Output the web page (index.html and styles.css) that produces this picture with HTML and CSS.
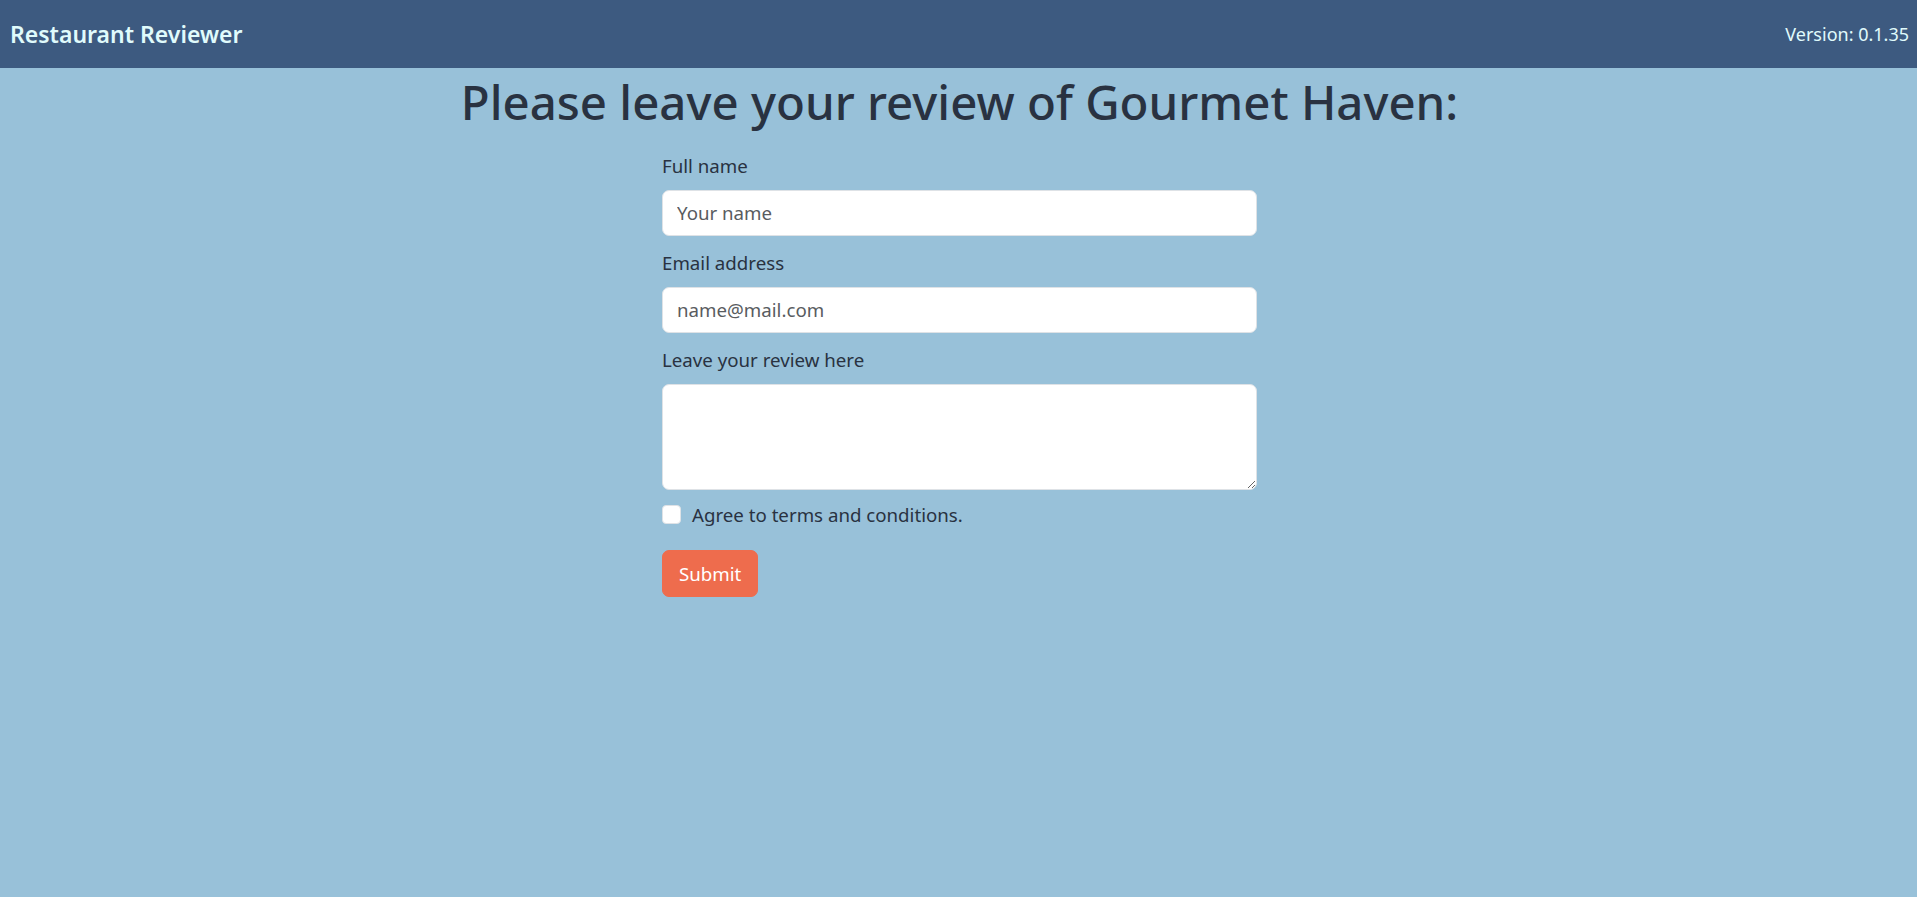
FILE: index.html
```html
<!DOCTYPE html>
<html lang="en">
<head>
<meta charset="utf-8">
<title>Restaurant Reviewer</title>
<link rel="stylesheet" href="styles.css">
</head>
<body>
<header class="topbar">
  <span class="brand">Restaurant Reviewer</span>
  <span class="version">Version: 0.1.35</span>
</header>
<main class="page">
  <h1 class="title">Please leave your review of Gourmet Haven:</h1>
  <form class="review-form">
    <label class="field-label" for="name">Full name</label>
    <input class="field" id="name" type="text" placeholder="Your name">
    <label class="field-label" for="email">Email address</label>
    <input class="field" id="email" type="email" placeholder="name@mail.com">
    <label class="field-label" for="review">Leave your review here</label>
    <textarea class="field area" id="review"></textarea>
    <label class="check-row">
      <input class="check" type="checkbox">
      <span>Agree to terms and conditions.</span>
    </label>
    <button class="submit" type="button">Submit</button>
  </form>
</main>
</body>
</html>
```

FILE: styles.css
```css
* { box-sizing: border-box; }

html, body {
  margin: 0;
  padding: 0;
}

body {
  background: #98c1d9;
  font-family: "Noto Sans", "Open Sans", sans-serif;
  font-size: 18.7px;
  line-height: 27px;
  color: #293241;
  min-height: 897px;
}

.topbar {
  height: 68px;
  background: #3d5a80;
  color: #e0fbfc;
  display: flex;
  align-items: center;
  justify-content: space-between;
  padding: 0 8px 0 10px;
}

.brand {
  font-size: 23px;
  font-weight: 600;
}

.version {
  font-size: 18px;
}

.page {
  display: flex;
  flex-direction: column;
  align-items: center;
  padding-left: 2px;
}

.title {
  margin: 5px 0 21px;
  font-size: 47.4px;
  font-weight: 500;
  line-height: 57.6px;
  color: #293241;
}

.review-form {
  width: 595px;
  display: flex;
  flex-direction: column;
  align-items: flex-start;
}

.field-label {
  display: block;
  margin-bottom: 11px;
}

.field {
  display: block;
  width: 100%;
  height: 46px;
  margin: 0 0 13px;
  padding: 0 14px;
  border: 1px solid #dee2e6;
  border-radius: 7px;
  background: #fff;
  font: inherit;
  color: #212529;
}

.field::placeholder {
  color: #595c5f;
}

.area {
  height: 106px;
  padding: 9px 14px;
  margin-bottom: 11px;
  resize: vertical;
}

.check-row {
  display: flex;
  align-items: center;
  gap: 11px;
  margin-bottom: 22px;
}

.check {
  appearance: none;
  -webkit-appearance: none;
  width: 19px;
  height: 19px;
  margin: 0;
  background: #fff;
  border: 1px solid #dee2e6;
  border-radius: 4px;
}

.submit {
  height: 47px;
  padding: 0 16px;
  border: 1px solid #ee6c4d;
  border-radius: 7px;
  background: #ee6c4d;
  color: #fff;
  font: inherit;
}
```
